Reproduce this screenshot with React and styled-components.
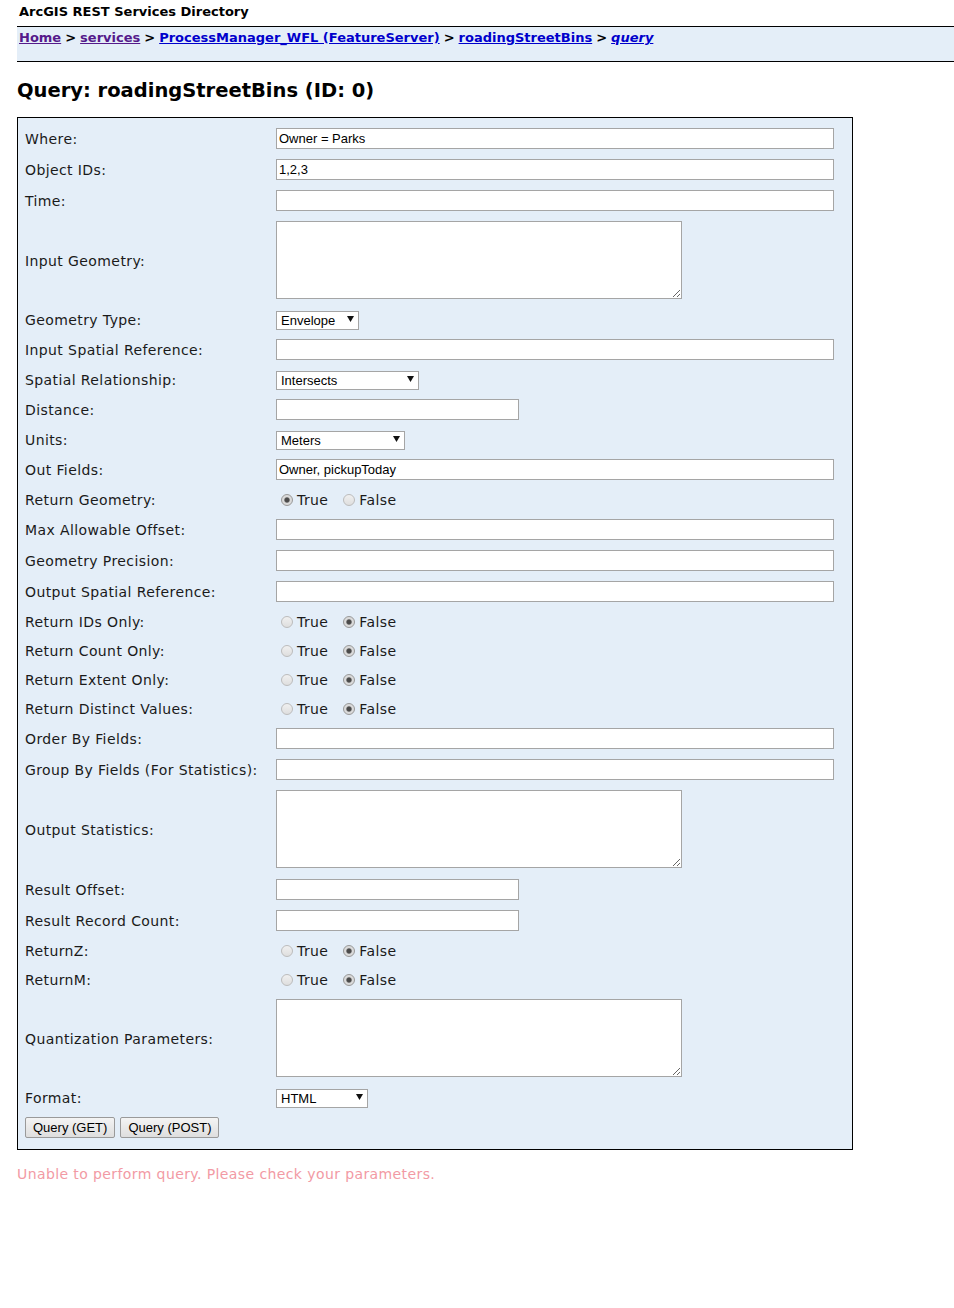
import React from "react";
import styled, { createGlobalStyle } from "styled-components";

const GlobalStyle = createGlobalStyle`
  html, body { margin: 0; padding: 0; background: #fff; }
  body { font-family: "DejaVu Sans", Verdana, sans-serif; color: #111; }
`;

const Page = styled.div`
  padding-left: 17px;
  overflow: hidden;
`;

const TopHeader = styled.div`
  height: 27px;
  box-sizing: border-box;
  padding: 4px 2px 0;
  border-bottom: 1px solid #000;
  font-size: 13px;
  line-height: 16px;
  font-weight: bold;
  color: #000;
`;

const NavBar = styled.div`
  background: #e4eef8;
  border-bottom: 1px solid #000;
  padding: 3px 2px 15px;
  font-size: 13px;
  line-height: 16px;
  font-weight: bold;
  color: #000;
`;

const Crumb = styled.a`
  color: ${(p) => (p.$visited ? "#551a8b" : "#0000cc")};
  text-decoration: underline;
  font-style: ${(p) => (p.$italic ? "italic" : "normal")};
`;

const Sep = styled.span`
  margin: 0 4px;
`;

const Title = styled.h2`
  margin: 17px 0 14px;
  font-size: 19.5px;
  line-height: 24px;
  font-weight: bold;
  color: #000;
`;

const FormBox = styled.form`
  width: 836px;
  box-sizing: border-box;
  background: #e4eef8;
  border: 1px solid #000;
  padding: 5px 7px 11px;
`;

const Row = styled.div`
  display: flex;
  align-items: center;
  padding: 5px 0;
`;

const Label = styled.div`
  width: 251px;
  flex: none;
  font-size: 14px;
  letter-spacing: 0.4px;
  color: #1a1a1a;
`;

const Field = styled.div`
  flex: 1;
  display: flex;
  align-items: center;
  min-height: ${(p) => p.$h}px;
`;

const TextInput = styled.input`
  width: ${(p) => p.$w || 558}px;
  height: 21px;
  box-sizing: border-box;
  border: 1px solid #a5a5a5;
  background: #fff;
  margin: 0;
  padding: 0 2px;
  font: 13px "Liberation Sans", Arial, sans-serif;
  color: #000;
  outline: none;
`;

const TextArea = styled.textarea`
  display: block;
  width: 406px;
  height: 78px;
  box-sizing: border-box;
  border: 1px solid #a5a5a5;
  background: #fff;
  margin: 0 0 1px;
  padding: 2px;
  font: 13px "Liberation Sans", Arial, sans-serif;
  resize: both;
`;

const SelectBox = styled.div`
  position: relative;
  width: ${(p) => p.$w}px;
  height: 19px;
`;

const NativeSelect = styled.select`
  appearance: none;
  -webkit-appearance: none;
  width: 100%;
  height: 100%;
  box-sizing: border-box;
  border: 1px solid #a5a5a5;
  border-radius: 0;
  background: #fff;
  margin: 0;
  padding: 0 0 0 4px;
  font: 13px "Liberation Sans", Arial, sans-serif;
  color: #000;
  outline: none;
`;

const Arrow = styled.svg`
  position: absolute;
  right: 5px;
  top: 6px;
  pointer-events: none;
`;

const RadioGroup = styled.div`
  display: flex;
  align-items: center;
  height: 19px;
  font-size: 14px;
  letter-spacing: 0.4px;
  color: #1a1a1a;
`;

const RadioOption = styled.label`
  display: inline-flex;
  align-items: center;
  margin-right: 10px;
`;

const Radio = styled.input.attrs({ type: "radio" })`
  appearance: none;
  -webkit-appearance: none;
  width: 12px;
  height: 12px;
  box-sizing: border-box;
  border-radius: 50%;
  border: 1px solid #bcbcbc;
  background: linear-gradient(#f0f0f0, #dedede);
  margin: 0 4px 0 5px;
  &:checked {
    border-color: #999;
    background: radial-gradient(circle, #4a4a4a 0 2px, #8a8a8a 2.6px, #dadada 3.2px);
  }
`;

const ButtonRow = styled.div`
  display: flex;
  gap: 5px;
  padding: 5px 0 0;
`;

const Button = styled.button`
  height: 21px;
  padding: 0 7px;
  border: 1px solid #9a9a9a;
  border-radius: 2px;
  background: linear-gradient(#f4f4f4, #dedede);
  font: 13px "Liberation Sans", Arial, sans-serif;
  color: #000;
`;

const ErrorText = styled.p`
  margin: 16px 0 0;
  font-size: 14px;
  line-height: 17px;
  letter-spacing: 0.4px;
  color: #f29aa4;
`;

const rows = [
  { label: "Where:", type: "text", value: "Owner = Parks" },
  { label: "Object IDs:", type: "text", value: "1,2,3" },
  { label: "Time:", type: "text" },
  { label: "Input Geometry:", type: "area" },
  { label: "Geometry Type:", type: "select", value: "Envelope", w: 83 },
  { label: "Input Spatial Reference:", type: "text" },
  { label: "Spatial Relationship:", type: "select", value: "Intersects", w: 143 },
  { label: "Distance:", type: "text", w: 243 },
  { label: "Units:", type: "select", value: "Meters", w: 129 },
  { label: "Out Fields:", type: "text", value: "Owner, pickupToday" },
  { label: "Return Geometry:", type: "radio", checked: true },
  { label: "Max Allowable Offset:", type: "text" },
  { label: "Geometry Precision:", type: "text" },
  { label: "Output Spatial Reference:", type: "text" },
  { label: "Return IDs Only:", type: "radio", checked: false },
  { label: "Return Count Only:", type: "radio", checked: false },
  { label: "Return Extent Only:", type: "radio", checked: false },
  { label: "Return Distinct Values:", type: "radio", checked: false },
  { label: "Order By Fields:", type: "text" },
  { label: "Group By Fields (For Statistics):", type: "text" },
  { label: "Output Statistics:", type: "area" },
  { label: "Result Offset:", type: "text", w: 243 },
  { label: "Result Record Count:", type: "text", w: 243 },
  { label: "ReturnZ:", type: "radio", checked: false },
  { label: "ReturnM:", type: "radio", checked: false },
  { label: "Quantization Parameters:", type: "area" },
  { label: "Format:", type: "select", value: "HTML", w: 92 },
];

const heights = { text: 21, area: 79, select: 19, radio: 19 };

function Control({ row, idx }) {
  if (row.type === "text")
    return <TextInput $w={row.w} defaultValue={row.value || ""} />;
  if (row.type === "area") return <TextArea />;
  if (row.type === "select")
    return (
      <SelectBox $w={row.w}>
        <NativeSelect defaultValue={row.value}>
          <option>{row.value}</option>
        </NativeSelect>
        <Arrow width="7" height="6" viewBox="0 0 7 6">
          <path d="M0 0H7L3.5 6Z" fill="#111" />
        </Arrow>
      </SelectBox>
    );
  return (
    <RadioGroup>
      <RadioOption>
        <Radio name={"r" + idx} defaultChecked={row.checked} />
        True
      </RadioOption>
      <RadioOption>
        <Radio name={"r" + idx} defaultChecked={!row.checked} />
        False
      </RadioOption>
    </RadioGroup>
  );
}

export default function App() {
  return (
    <Page>
      <GlobalStyle />
      <TopHeader>ArcGIS REST Services Directory</TopHeader>
      <NavBar>
        <Crumb href="#" $visited>Home</Crumb>
        <Sep>&gt;</Sep>
        <Crumb href="#" $visited>services</Crumb>
        <Sep>&gt;</Sep>
        <Crumb href="#">ProcessManager_WFL (FeatureServer)</Crumb>
        <Sep>&gt;</Sep>
        <Crumb href="#">roadingStreetBins</Crumb>
        <Sep>&gt;</Sep>
        <Crumb href="#" $italic>query</Crumb>
      </NavBar>
      <Title>Query: roadingStreetBins (ID: 0)</Title>
      <FormBox onSubmit={(e) => e.preventDefault()}>
        {rows.map((row, i) => (
          <Row key={row.label}>
            <Label>{row.label}</Label>
            <Field $h={heights[row.type]}>
              <Control row={row} idx={i} />
            </Field>
          </Row>
        ))}
        <ButtonRow>
          <Button type="button">Query (GET)</Button>
          <Button type="button">Query (POST)</Button>
        </ButtonRow>
      </FormBox>
      <ErrorText>Unable to perform query. Please check your parameters.</ErrorText>
    </Page>
  );
}
